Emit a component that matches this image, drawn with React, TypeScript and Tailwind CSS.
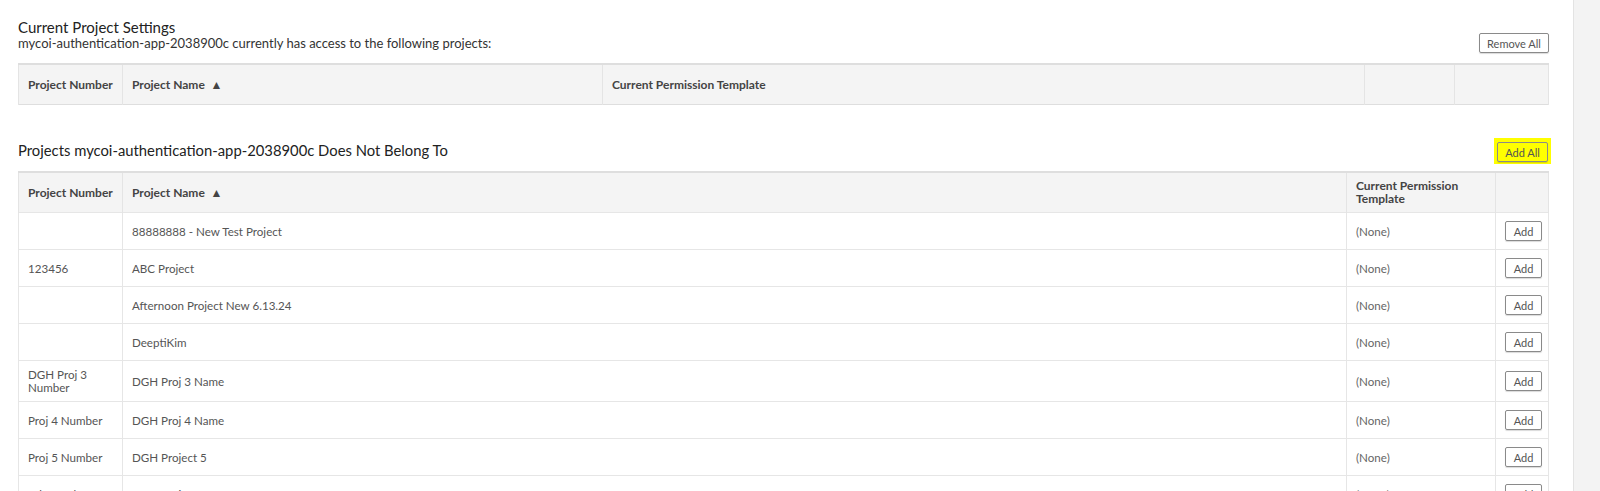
const rows = [
  { num: '', name: '88888888 - New Test Project' },
  { num: '123456', name: 'ABC Project' },
  { num: '', name: 'Afternoon Project New 6.13.24' },
  { num: '', name: 'DeeptiKim' },
  { num: 'DGH Proj 3 Number', name: 'DGH Proj 3 Name' },
  { num: 'Proj 4 Number', name: 'DGH Proj 4 Name' },
  { num: 'Proj 5 Number', name: 'DGH Project 5' },
  { num: 'Job Number 6', name: 'DGH Project 6' },
];

const SmallButton = ({ label, className = '' }: { label: string; className?: string }) => (
  <button
    className={`h-[20px] border border-[#8a8a8a] rounded-[2px] px-[6px] text-[11px] leading-none text-[#555] shadow-[0_1px_1px_rgba(0,0,0,0.15)] ${className}`}
  >
    {label}
  </button>
);

const th = 'text-left align-middle font-bold text-[12px] leading-[13px] text-[#444] px-[9px] border-x border-[#e4e4e4]';
const td = 'align-middle text-[11.6px] leading-[13px] text-[#555] px-[9px] py-[7px] border border-[#e6e6e6]';

export default function App() {
  return (
    <div className="flex h-[491px] overflow-hidden bg-white" style={{ fontFamily: 'Lato, "Open Sans", sans-serif' }}>
      <div className="flex-1 pl-[18px] pr-[24px]">
        {/* Current project settings */}
        <div className="flex items-end justify-between pt-[19px]">
          <div>
            <h2 className="text-[15px] leading-[17px] text-[#222]">Current Project Settings</h2>
            <p className="text-[13px] leading-[14px] text-[#333]">
              mycoi-authentication-app-2038900c currently has access to the following projects:
            </p>
          </div>
          <SmallButton label="Remove All" className="w-[70px] mb-[-3px]" />
        </div>

        <table className="mt-[13px] w-full table-fixed border-collapse">
          <colgroup>
            <col className="w-[104px]" />
            <col className="w-[480px]" />
            <col />
            <col className="w-[90px]" />
            <col className="w-[94px]" />
          </colgroup>
          <thead>
            <tr className="h-[40px] bg-[#f4f4f4] border-t-2 border-b border-[#dedede]">
              <th className={th}>Project Number</th>
              <th className={th}>Project Name &nbsp;▲</th>
              <th className={th}>Current Permission Template</th>
              <th className={th}></th>
              <th className={th}></th>
            </tr>
          </thead>
        </table>

        {/* Projects not belonging */}
        <div className="mt-[33px] flex items-center justify-between">
          <h2 className="text-[14.8px] leading-[17px] text-[#222]">
            Projects mycoi-authentication-app-2038900c Does Not Belong To
          </h2>
          <div className="bg-[#ffff00] py-[1px] px-[3px] -mr-[2px]">
            <SmallButton label="Add All" className="w-[51px] bg-transparent" />
          </div>
        </div>

        <table className="mt-[7px] w-full table-fixed border-collapse">
          <colgroup>
            <col className="w-[104px]" />
            <col />
            <col className="w-[149px]" />
            <col className="w-[53px]" />
          </colgroup>
          <thead>
            <tr className="h-[41px] bg-[#f4f4f4] border-t-2 border-b border-[#dedede]">
              <th className={th}>Project Number</th>
              <th className={th}>Project Name &nbsp;▲</th>
              <th className={th}>Current Permission Template</th>
              <th className={th}></th>
            </tr>
          </thead>
          <tbody>
            {rows.map((r) => (
              <tr key={r.name} className="h-[37px]">
                <td className={`${td} text-[#444]`}>{r.num}</td>
                <td className={td}>{r.name}</td>
                <td className={`${td} text-[#666]`}>(None)</td>
                <td className={`${td} text-center px-0`}>
                  <SmallButton label="Add" className="w-[37px]" />
                </td>
              </tr>
            ))}
          </tbody>
        </table>
      </div>
      <div className="w-[27px] shrink-0 bg-[#f3f3f3] border-l border-[#e3e3e3]" />
    </div>
  );
}
